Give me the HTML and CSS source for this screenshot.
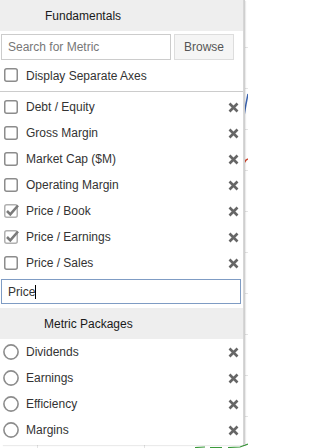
FILE: index.html
```html
<!DOCTYPE html>
<html>
<head>
<meta charset="utf-8">
<link rel="stylesheet" href="styles.css">
</head>
<body>
<svg class="chart" width="248" height="448" viewBox="0 0 248 448">
  <g stroke="#e4e4e4" stroke-width="1">
    <line x1="0" y1="47.5" x2="248" y2="47.5"/>
    <line x1="0" y1="88.5" x2="248" y2="88.5"/>
    <line x1="0" y1="129.5" x2="248" y2="129.5"/>
    <line x1="0" y1="170.5" x2="248" y2="170.5"/>
    <line x1="0" y1="211.5" x2="248" y2="211.5"/>
    <line x1="0" y1="252.5" x2="248" y2="252.5"/>
    <line x1="0" y1="293.5" x2="248" y2="293.5"/>
    <line x1="0" y1="334.5" x2="248" y2="334.5"/>
    <line x1="0" y1="375.5" x2="248" y2="375.5"/>
    <line x1="0" y1="416.5" x2="248" y2="416.5"/>
    <line x1="37.5" y1="0" x2="37.5" y2="448"/>
    <line x1="144.5" y1="0" x2="144.5" y2="448"/>
  </g>
  <path d="M244 116 L246 104 L248 94" stroke="#3a63b0" stroke-width="1.5" fill="none"/>
  <path d="M244 163 L246 160 L248 159" stroke="#d0442c" stroke-width="1.5" fill="none"/>
  <path d="M195 447.5 L205 447 M210 447.5 L222 447.5 M228 447.5 L240 447 L248 444" stroke="#3b9a3b" stroke-width="1.2" fill="none"/>
</svg>

<div class="panel">
  <div class="section-head">Fundamentals</div>
  <div class="search-row">
    <input class="search" type="text" placeholder="Search for Metric">
    <button class="browse">Browse</button>
  </div>
  <div class="axes-row">
    <svg class="cb" width="15" height="15" viewBox="0 0 15 15"><rect x="0.75" y="0.75" width="12.5" height="12.5" rx="2" fill="#fff" stroke="#8c8c8c" stroke-width="1.5"/></svg>
    <span>Display Separate Axes</span>
  </div>
  <div class="list first">
    <div class="row">
      <svg class="cb" width="15" height="15" viewBox="0 0 15 15"><rect x="0.75" y="0.75" width="12.5" height="12.5" rx="2" fill="#fff" stroke="#8c8c8c" stroke-width="1.5"/></svg>
      <span class="label">Debt / Equity</span>
      <svg class="x" width="11" height="11" viewBox="0 0 11 11"><path d="M1.5 1.5 L9.5 9.5 M9.5 1.5 L1.5 9.5" stroke="#666" stroke-width="2.6"/></svg>
    </div>
    <div class="row">
      <svg class="cb" width="15" height="15" viewBox="0 0 15 15"><rect x="0.75" y="0.75" width="12.5" height="12.5" rx="2" fill="#fff" stroke="#8c8c8c" stroke-width="1.5"/></svg>
      <span class="label">Gross Margin</span>
      <svg class="x" width="11" height="11" viewBox="0 0 11 11"><path d="M1.5 1.5 L9.5 9.5 M9.5 1.5 L1.5 9.5" stroke="#666" stroke-width="2.6"/></svg>
    </div>
    <div class="row">
      <svg class="cb" width="15" height="15" viewBox="0 0 15 15"><rect x="0.75" y="0.75" width="12.5" height="12.5" rx="2" fill="#fff" stroke="#8c8c8c" stroke-width="1.5"/></svg>
      <span class="label">Market Cap ($M)</span>
      <svg class="x" width="11" height="11" viewBox="0 0 11 11"><path d="M1.5 1.5 L9.5 9.5 M9.5 1.5 L1.5 9.5" stroke="#666" stroke-width="2.6"/></svg>
    </div>
    <div class="row">
      <svg class="cb" width="15" height="15" viewBox="0 0 15 15"><rect x="0.75" y="0.75" width="12.5" height="12.5" rx="2" fill="#fff" stroke="#8c8c8c" stroke-width="1.5"/></svg>
      <span class="label">Operating Margin</span>
      <svg class="x" width="11" height="11" viewBox="0 0 11 11"><path d="M1.5 1.5 L9.5 9.5 M9.5 1.5 L1.5 9.5" stroke="#666" stroke-width="2.6"/></svg>
    </div>
    <div class="row">
      <svg class="cb" width="15" height="15" viewBox="0 0 15 15"><rect x="0.75" y="0.75" width="12.5" height="12.5" rx="2" fill="#fff" stroke="#b0b0b0" stroke-width="1.5"/><path d="M3 7 L6.3 10.3 L14 1.5" stroke="#7a7a7a" stroke-width="2.6" fill="none"/></svg>
      <span class="label">Price / Book</span>
      <svg class="x" width="11" height="11" viewBox="0 0 11 11"><path d="M1.5 1.5 L9.5 9.5 M9.5 1.5 L1.5 9.5" stroke="#666" stroke-width="2.6"/></svg>
    </div>
    <div class="row">
      <svg class="cb" width="15" height="15" viewBox="0 0 15 15"><rect x="0.75" y="0.75" width="12.5" height="12.5" rx="2" fill="#fff" stroke="#b0b0b0" stroke-width="1.5"/><path d="M3 7 L6.3 10.3 L14 1.5" stroke="#7a7a7a" stroke-width="2.6" fill="none"/></svg>
      <span class="label">Price / Earnings</span>
      <svg class="x" width="11" height="11" viewBox="0 0 11 11"><path d="M1.5 1.5 L9.5 9.5 M9.5 1.5 L1.5 9.5" stroke="#666" stroke-width="2.6"/></svg>
    </div>
    <div class="row">
      <svg class="cb" width="15" height="15" viewBox="0 0 15 15"><rect x="0.75" y="0.75" width="12.5" height="12.5" rx="2" fill="#fff" stroke="#8c8c8c" stroke-width="1.5"/></svg>
      <span class="label">Price / Sales</span>
      <svg class="x" width="11" height="11" viewBox="0 0 11 11"><path d="M1.5 1.5 L9.5 9.5 M9.5 1.5 L1.5 9.5" stroke="#666" stroke-width="2.6"/></svg>
    </div>
  </div>
  <div class="filter"><span>Price</span><span class="caret"></span></div>
  <div class="section-head pk">Metric Packages</div>
  <div class="list">
    <div class="row">
      <svg class="rd" width="16" height="16" viewBox="0 0 16 16"><circle cx="8" cy="8" r="7.1" fill="#fff" stroke="#8c8c8c" stroke-width="1.6"/></svg>
      <span class="label">Dividends</span>
      <svg class="x" width="11" height="11" viewBox="0 0 11 11"><path d="M1.5 1.5 L9.5 9.5 M9.5 1.5 L1.5 9.5" stroke="#666" stroke-width="2.6"/></svg>
    </div>
    <div class="row">
      <svg class="rd" width="16" height="16" viewBox="0 0 16 16"><circle cx="8" cy="8" r="7.1" fill="#fff" stroke="#8c8c8c" stroke-width="1.6"/></svg>
      <span class="label">Earnings</span>
      <svg class="x" width="11" height="11" viewBox="0 0 11 11"><path d="M1.5 1.5 L9.5 9.5 M9.5 1.5 L1.5 9.5" stroke="#666" stroke-width="2.6"/></svg>
    </div>
    <div class="row">
      <svg class="rd" width="16" height="16" viewBox="0 0 16 16"><circle cx="8" cy="8" r="7.1" fill="#fff" stroke="#8c8c8c" stroke-width="1.6"/></svg>
      <span class="label">Efficiency</span>
      <svg class="x" width="11" height="11" viewBox="0 0 11 11"><path d="M1.5 1.5 L9.5 9.5 M9.5 1.5 L1.5 9.5" stroke="#666" stroke-width="2.6"/></svg>
    </div>
    <div class="row">
      <svg class="rd" width="16" height="16" viewBox="0 0 16 16"><circle cx="8" cy="8" r="7.1" fill="#fff" stroke="#8c8c8c" stroke-width="1.6"/></svg>
      <span class="label">Margins</span>
      <svg class="x" width="11" height="11" viewBox="0 0 11 11"><path d="M1.5 1.5 L9.5 9.5 M9.5 1.5 L1.5 9.5" stroke="#666" stroke-width="2.6"/></svg>
    </div>
  </div>
</div>
</body>
</html>
```

FILE: styles.css
```css
html, body {
  margin: 0;
  padding: 0;
  background: #fff;
}
body {
  position: relative;
  width: 248px;
  height: 448px;
  overflow: hidden;
  font-family: "Liberation Sans", Arial, sans-serif;
  font-size: 12px;
  color: #333;
}
.chart {
  position: absolute;
  left: 0;
  top: 0;
}
.panel {
  position: absolute;
  left: 0;
  top: 0;
  width: 243px;
  height: 445px;
  background: #fff;
  box-shadow: 1px 0 0 #d6d6d6, 2px 0 0 #cfcfcf, 3px 1px 1px rgba(0,0,0,0.08);
  display: flex;
  flex-direction: column;
}
.section-head {
  height: 31px;
  display: flex;
  align-items: center;
  padding-left: 45px;
  background: #eeeeee;
  color: #1a1a1a;
  font-size: 12px;
  flex-shrink: 0;
}
.section-head.pk {
  margin-top: 4px;
  padding-left: 44px;
}
.search-row {
  display: flex;
  margin-top: 3px;
  padding-left: 1px;
  gap: 3px;
  height: 26px;
}
.search {
  box-sizing: border-box;
  width: 170px;
  height: 26px;
  margin: 0;
  border: 1px solid #cccccc;
  padding: 0 6px;
  font-family: "Liberation Sans", Arial, sans-serif;
  font-size: 12px;
  color: #333;
  outline: none;
}
.search::placeholder {
  color: #777;
}
.browse {
  box-sizing: border-box;
  width: 60px;
  height: 26px;
  margin: 0;
  padding: 0;
  border: 1px solid #dddddd;
  background: #f5f5f5;
  color: #555;
  font-family: "Liberation Sans", Arial, sans-serif;
  font-size: 12px;
}
.axes-row {
  display: flex;
  align-items: center;
  height: 31px;
  padding-left: 4px;
  border-bottom: 1px solid #cccccc;
}
.cb, .rd {
  flex-shrink: 0;
  overflow: visible;
}
.cb {
  margin-right: 7px;
}
.rd {
  margin-left: -1px;
  margin-right: 7px;
}
.list {
  display: flex;
  flex-direction: column;
}
.list.first {
  padding-top: 2px;
}
.row {
  display: flex;
  align-items: center;
  height: 26px;
  padding: 0 4px 0 4px;
}
.label {
  flex: 1;
  color: #333;
}
.x {
  flex-shrink: 0;
}
.filter {
  box-sizing: border-box;
  margin: 3px 0 0 1px;
  width: 240px;
  height: 25px;
  border: 1px solid #7f9cc4;
  display: flex;
  align-items: center;
  padding-left: 6px;
  color: #333;
}
.caret {
  display: inline-block;
  width: 1px;
  height: 14px;
  background: #000;
}
```
